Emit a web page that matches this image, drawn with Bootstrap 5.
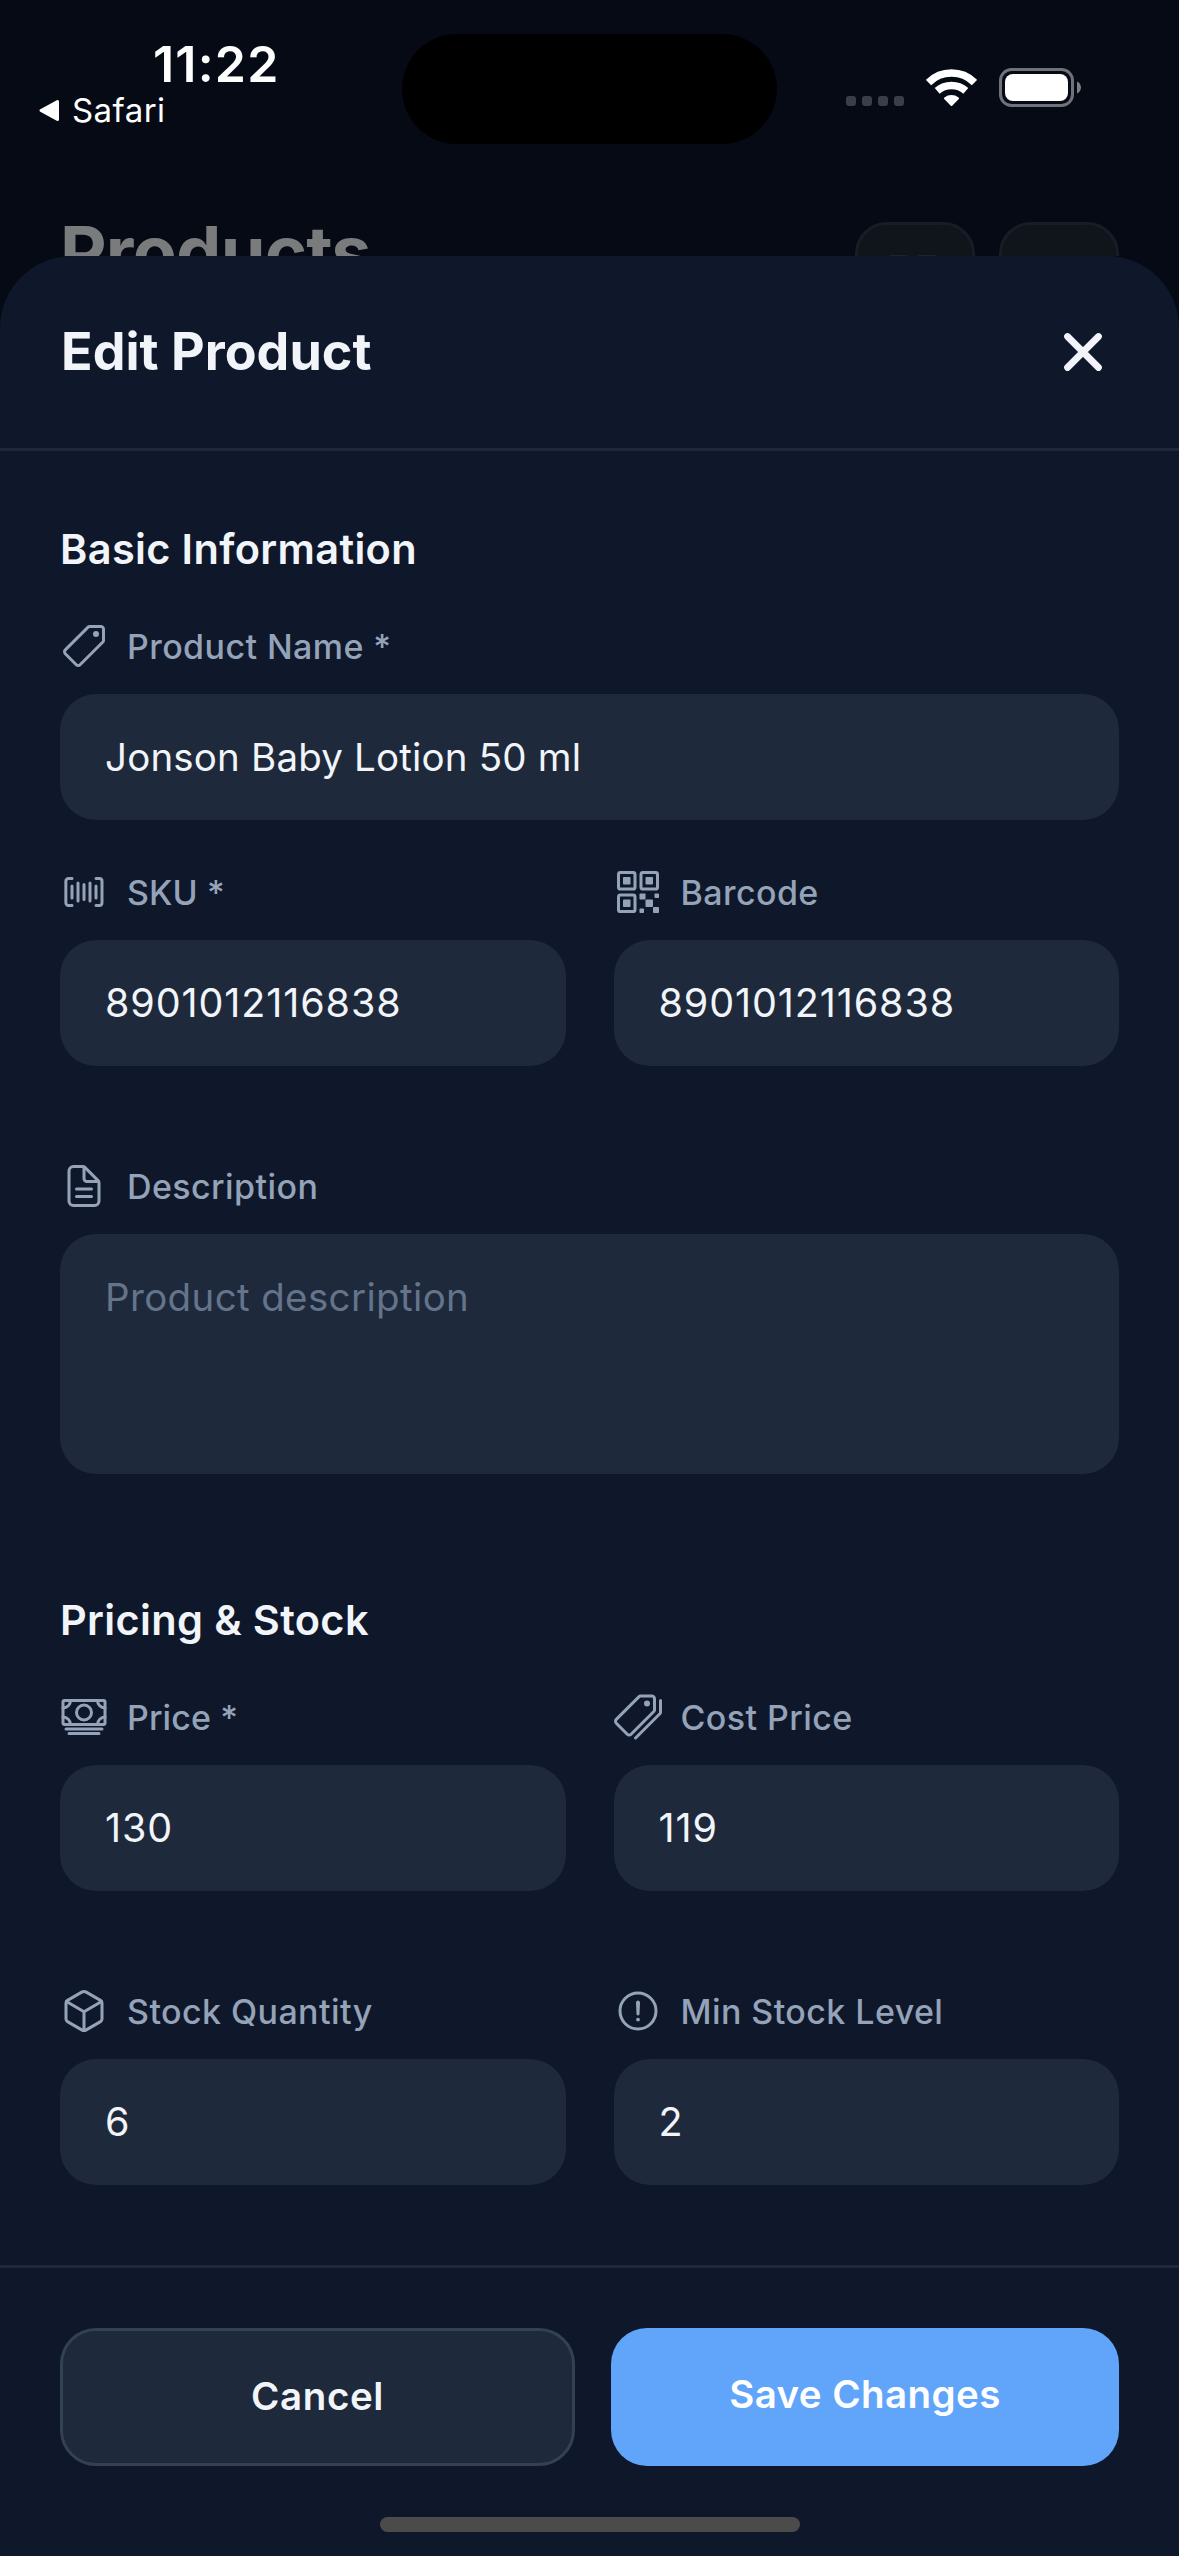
<!DOCTYPE html>
<html lang="en" data-bs-theme="dark">
<head>
<meta charset="utf-8">
<meta name="viewport" content="width=device-width, initial-scale=1">
<title>Edit Product</title>
<link href="https://cdn.jsdelivr.net/npm/bootstrap@5.3.0/dist/css/bootstrap.min.css" rel="stylesheet">
<style>
  body { background: #060a14; font-family: Inter, "Liberation Sans", sans-serif; width: 1179px; height: 2556px; overflow: hidden; }
  svg { display: block; flex: none; }
  .screen-top { height: 256px; }
  .status-bar { height: 222px; }
  .status-left { width: 402px; padding: 36px 0 0 38px; }
  .clock { font-size: 50px; font-weight: 600; line-height: 57px; letter-spacing: 1.2px; padding-left: 115px; }
  .back-link { font-size: 33px; line-height: 34px; letter-spacing: .43px; gap: 11px; }
  .island { width: 375px; height: 110px; margin-top: 34px; border-radius: 55px; background: #000; }
  .status-right { margin: 68px 0 0 69px; gap: 22px; }
  .page-title { font-size: 72px; font-weight: 700; line-height: 60px; letter-spacing: -.78px; color: #7a7b7d; }
  .ghost-btn { width: 120px; height: 120px; border: 3px solid #181c25; border-radius: 32px; background: #10141b; }
  .edge-x { padding-left: 60px; padding-right: 60px; }
  .sheet { height: 2300px; background: #0f172a; border-radius: 72px 72px 0 0; color: #f1f5f9; }
  .sheet-head { height: 195px; border-bottom: 3px solid #1e293b; }
  .sheet-title { font-size: 52px; font-weight: 700; line-height: 60px; letter-spacing: .04px; padding-left: 1px; color: #f1f5f9; }
  .close-btn { padding: 0 15px 0 0; border: 0; background: none; color: inherit; }
  .sheet-body { padding-top: 71px; }
  .group-title { font-size: 41.5px; font-weight: 600; line-height: 54px; letter-spacing: .35px; margin-bottom: 46px; color: #f1f5f9; }
  .field-label { height: 48px; gap: 19px; margin-bottom: 24px; font-size: 34px; font-weight: 500; letter-spacing: .42px; color: #94a3b8; white-space: pre; }
  .tight { letter-spacing: .1px; }
  .field-label svg { fill: none; stroke: #94a3b8; stroke-width: 32; stroke-linecap: round; stroke-linejoin: round; }
  .field-label .solid { fill: #94a3b8; stroke: none; }
  .form-control, .form-control:focus { height: 126px; padding: 0 45px; border: 0; border-radius: 36px; background: #1e293b; color: #f1f5f9; font-size: 38.5px; line-height: 48px; letter-spacing: .18px; box-shadow: none; }
  .form-control::placeholder { color: #64748b; letter-spacing: .36px; opacity: 1; }
  .form-control.digits { font-size: 39.5px; letter-spacing: .9px; }
  textarea.form-control { height: 240px; padding-top: 39px; resize: none; }
  .pair { --bs-gutter-x: 48px; }
  .gap-s { margin-bottom: 48px; }
  .gap-m { margin-bottom: 96px; }
  .gap-l { margin-bottom: 119px; }
  .gap-end { margin-bottom: 80px; }
  .sheet-foot { height: 291px; padding-top: 60px; border-top: 3px solid #1e293b; gap: 36px; }
  .act { height: 138px; padding: 0; border-radius: 36px; font-size: 38.5px; font-weight: 600; }
  .act-cancel { width: 515px; border: 3px solid #334155; background: #1e293b; color: #f1f5f9; letter-spacing: .6px; }
  .act-save { width: 508px; border: 0; padding-bottom: 5px; background: #60a5fa; color: #fff; letter-spacing: .43px; }
  .home-bar { left: 380px; top: 2517px; width: 420px; height: 15px; border-radius: 8px; background: #4b4b4b; }
</style>
</head>
<body class="position-relative">

<header class="screen-top overflow-hidden text-white">
  <div class="status-bar d-flex align-items-start">
    <div class="status-left">
      <div class="clock">11:22</div>
      <div class="back-link d-flex align-items-center">
        <svg width="23" height="23" viewBox="0 0 23 23"><path d="M19.5 2.5v18L3 11.5z" fill="#fff" stroke="#fff" stroke-width="3" stroke-linejoin="round"/></svg>
        <span>Safari</span>
      </div>
    </div>
    <div class="island"></div>
    <div class="status-right d-flex">
      <svg width="58" height="39" viewBox="0 0 58 39" fill="#3b3e47"><rect y="28" width="10" height="10" rx="3"/><rect x="16" y="28" width="10" height="10" rx="3"/><rect x="32" y="28" width="10" height="10" rx="3"/><rect x="48" y="28" width="10" height="10" rx="3"/></svg>
      <svg width="51" height="39" viewBox="0 0 51 39" fill="none" stroke="#fff" stroke-width="7.6"><path d="M2.5 14.5A32.6 32.6 0 0 1 48.5 14.5"/><path d="M11.2 22.8A21.9 21.9 0 0 1 39.8 22.8"/><path d="M24.8 37.7L18.2 31.1Q17.4 30.2 18.4 29.400A12 12 0 0 1 32.600 29.400Q33.600 30.200 32.800 31.100L26.200 37.700Q25.500 38.300 24.800 37.700Z" fill="#fff" stroke="none"/></svg>
      <svg width="83" height="39" viewBox="0 0 83 39"><rect x="1.5" y="1.500" width="72" height="36" rx="11" fill="none" stroke="#70727a" stroke-width="3"/><rect x="6" y="6" width="63" height="27" rx="8" fill="#fff"/><path d="M78 13.500c5.300 2.300 5.300 9.700 0 12z" fill="#7d7f85"/></svg>
    </div>
  </div>
  <div class="edge-x d-flex justify-content-between align-items-start">
    <div class="page-title">Products</div>
    <div class="d-flex gap-4">
      <div class="ghost-btn"><svg width="114" height="114" viewBox="0 0 114 114" fill="none" stroke="#1f232b" stroke-width="3"><rect x="31.500" y="31.500" width="18" height="18" rx="2"/><rect x="59.500" y="31.500" width="18" height="18" rx="2"/></svg></div>
      <div class="ghost-btn"></div>
    </div>
  </div>
</header>

<main class="sheet d-flex flex-column">
  <div class="sheet-head edge-x d-flex justify-content-between align-items-center flex-shrink-0">
    <h1 class="sheet-title m-0">Edit Product</h1>
    <button class="close-btn" type="button" aria-label="Close"><svg width="42" height="42" viewBox="0 0 42 42" stroke="#f1f5f9" stroke-width="6.8" stroke-linecap="round"><path d="M5.5 5.500l31 31M36.500 5.500l-31 31"/></svg></button>
  </div>

  <form class="sheet-body edge-x flex-grow-1">
    <h2 class="group-title">Basic Information</h2>
    <div class="gap-s">
      <label class="field-label d-flex align-items-center"><svg width="48" height="48" viewBox="0 0 512 512"><path d="M435.250 48h-122.900a14.460 14.460 0 00-10.200 4.200L56.450 297.900a28.850 28.850 0 000 40.700l117 117a28.850 28.850 0 0040.700 0L459.750 210a14.460 14.460 0 004.200-10.200v-123a28.660 28.660 0 00-28.700-28.800z"/><circle class="solid" cx="384" cy="128" r="32"/></svg><span>Product Name *</span></label>
      <input class="form-control" value="Jonson Baby Lotion 50 ml">
    </div>
    <div class="row pair gap-m">
      <div class="col-6">
        <label class="field-label d-flex align-items-center"><svg width="48" height="48" viewBox="0 0 512 512"><path d="M384 400.330l35.130-.33A29 29 0 00448 371.130V140.870A29 29 0 00419.130 112l-35.130.33M128 112l-36.800.33c-15.880 0-28.800 13-28.800 28.870v230.270c0 15.870 12.920 28.870 28.800 28.870L128 400M384 192v128M320 160v192M256 176v160M192 160v192M128 192v128"/></svg><span class="tight">SKU *</span></label>
        <input class="form-control digits" value="8901012116838">
      </div>
      <div class="col-6">
        <label class="field-label d-flex align-items-center"><svg width="48" height="48" viewBox="0 0 512 512"><rect x="48" y="48" width="176" height="176" rx="20"/><rect x="288" y="48" width="176" height="176" rx="20"/><rect x="48" y="288" width="176" height="176" rx="20"/><g class="solid"><rect x="96" y="96" width="80" height="80" rx="8"/><rect x="336" y="96" width="80" height="80" rx="8"/><rect x="96" y="336" width="80" height="80" rx="8"/><rect x="336" y="336" width="80" height="80" rx="8"/><rect x="272" y="272" width="64" height="64" rx="8"/><rect x="416" y="416" width="64" height="64" rx="8"/><rect x="432" y="272" width="48" height="48" rx="8"/><rect x="272" y="432" width="48" height="48" rx="8"/></g></svg><span>Barcode</span></label>
        <input class="form-control digits" value="8901012116838">
      </div>
    </div>
    <div class="gap-l">
      <label class="field-label d-flex align-items-center"><svg width="48" height="48" viewBox="0 0 512 512"><path d="M416 221.250V416a48 48 0 01-48 48H144a48 48 0 01-48-48V96a48 48 0 0148-48h98.750a32 32 0 0122.620 9.370l141.260 141.260a32 32 0 019.370 22.620z"/><path d="M256 56v120a32 32 0 0032 32h120M176 288h160M176 368h160"/></svg><span>Description</span></label>
      <textarea class="form-control d-block" placeholder="Product description"></textarea>
    </div>

    <h2 class="group-title">Pricing &amp; Stock</h2>
    <div class="row pair gap-m">
      <div class="col-6">
        <label class="field-label d-flex align-items-center"><svg width="48" height="48" viewBox="0 0 512 512"><rect x="32" y="80" width="448" height="256" rx="16"/><path d="M64 384h384M96 432h320"/><circle cx="256" cy="208" r="80"/><path d="M480 160a80 80 0 01-80-80M32 160a80 80 0 0080-80M480 256a80 80 0 00-80 80M32 256a80 80 0 0180 80"/></svg><span class="tight">Price *</span></label>
        <input class="form-control digits" value="130">
      </div>
      <div class="col-6">
        <label class="field-label d-flex align-items-center"><svg width="48" height="48" viewBox="0 0 512 512"><path d="M403.290 32H280.360a14.460 14.460 0 00-10.200 4.200L24.400 281.900a28.850 28.850 0 000 40.700l117 117a28.860 28.860 0 0040.710 0L427.800 194a14.460 14.460 0 004.200-10.200v-123A28.660 28.660 0 00403.290 32z"/><circle class="solid" cx="352" cy="112" r="32"/><path d="M230 480l262-262a13.810 13.810 0 004-10V80"/></svg><span>Cost Price</span></label>
        <input class="form-control digits" value="119">
      </div>
    </div>
    <div class="row pair gap-end">
      <div class="col-6">
        <label class="field-label d-flex align-items-center"><svg width="48" height="48" viewBox="0 0 512 512"><path d="M448 341.370V170.610A32 32 0 00432.110 143l-152-88.460a47.940 47.940 0 00-48.240 0L79.890 143A32 32 0 0064 170.610v170.760A32 32 0 0079.890 369l152 88.460a48 48 0 0048.240 0l152-88.460A32 32 0 00448 341.370z"/><path d="M69 153.990l187 110 187-110M256 463.990v-200"/></svg><span>Stock Quantity</span></label>
        <input class="form-control digits" value="6">
      </div>
      <div class="col-6">
        <label class="field-label d-flex align-items-center"><svg width="48" height="48" viewBox="0 0 512 512"><circle cx="256" cy="256" r="192"/><path d="M250.260 166.050L256 288l5.730-121.950a5.740 5.740 0 00-5.790-6 5.740 5.740 0 00-5.680 6z"/><circle class="solid" cx="256" cy="347.900" r="20"/></svg><span>Min Stock Level</span></label>
        <input class="form-control digits" value="2">
      </div>
    </div>
  </form>

  <footer class="sheet-foot edge-x d-flex flex-shrink-0 align-items-start">
    <button class="btn act act-cancel" type="button">Cancel</button>
    <button class="btn act act-save" type="button">Save Changes</button>
  </footer>
</main>
<div class="home-bar position-absolute"></div>

<script src="https://cdn.jsdelivr.net/npm/bootstrap@5.3.0/dist/js/bootstrap.bundle.min.js"></script>
</body>
</html>
